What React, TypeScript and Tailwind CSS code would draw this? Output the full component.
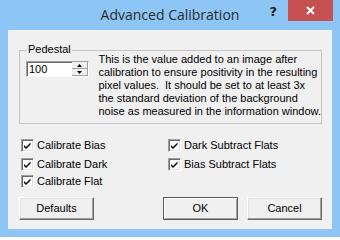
import React from "react";

const body = { fontFamily: '"Liberation Sans", Arial, sans-serif' };

function Check({ label }: { label: string }) {
  return (
    <div className="flex items-center h-[13px]">
      <div className="w-[13px] h-[13px] bg-white border border-t-[#a0a0a0] border-l-[#a0a0a0] border-b-white border-r-white shadow-[inset_1px_1px_0_#696969,inset_-1px_-1px_0_#e3e3e3] flex items-center justify-center">
        <svg width="9" height="9" viewBox="0 0 9 9">
          <path d="M1 4 L3 6 L7.5 1.5 L7.5 3.5 L3 8 L1 6 Z" fill="#000" />
        </svg>
      </div>
      <span className="ml-[3px] text-[11px] leading-[13px] text-black">{label}</span>
    </div>
  );
}

function Btn({ label, def }: { label: string; def?: boolean }) {
  return (
    <div
      className={
        "w-[75px] h-[23px] flex items-center justify-center text-[11px] text-black bg-[#f0f0f0] " +
        (def
          ? "border border-[#5a5a5a] shadow-[inset_1px_1px_0_#ffffff,inset_-1px_-1px_0_#a0a0a0]"
          : "border border-t-white border-l-white border-b-[#696969] border-r-[#696969] shadow-[inset_-1px_-1px_0_#a0a0a0,inset_1px_1px_0_#e3e3e3]")
      }
    >
      {label}
    </div>
  );
}

export default function App() {
  return (
    <div className="w-[340px] h-[237px] bg-[#8dc6f5] flex flex-col overflow-hidden" style={body}>
      <div className="h-[30px] grid grid-cols-[1fr_auto_1fr]">
        <div />
        <div
          className="pt-[5px] text-[14px] leading-[20px] text-[#2b2b2b]"
          style={{ fontFamily: '"Open Sans", "Noto Sans", sans-serif' }}
        >
          Advanced Calibration
        </div>
        <div className="flex justify-end items-start">
          <div className="mt-[4px] mr-[11px] text-[13px] font-bold leading-[15px] text-[#222]" style={{ fontFamily: '"DejaVu Sans", sans-serif' }}>?</div>
          <div className="w-[45px] h-[21px] mr-[7px] bg-[#c75050] flex items-center justify-center">
            <svg width="9" height="9" viewBox="0 0 9 9">
              <path d="M1 1 L8 8 M8 1 L1 8" stroke="#fff" strokeWidth="2" />
            </svg>
          </div>
        </div>
      </div>
      <div className="mx-[8px] h-[199px] bg-[#f0f0f0] flex flex-col pl-[11px] pr-[10px] pt-[20px]">
        <div className="relative w-[303px] h-[74px] border border-[#c4c4c4] flex items-start pl-[6px]">
          <div className="absolute left-[7px] top-[-8px] px-[1px] bg-[#f0f0f0] text-[11px] leading-[13px] text-black">
            Pedestal
          </div>
          <div className="mt-[10px] w-[72px] h-[16px] bg-white border border-t-[#a0a0a0] border-l-[#a0a0a0] border-b-white border-r-white shadow-[inset_1px_1px_0_#696969] flex">
            <div className="flex-1 pl-[2px] text-[11px] leading-[14px] text-black">100</div>
            <div className="w-[16px] flex flex-col">
              <div className="h-[7px] bg-[#f0f0f0] border-b border-r border-[#a0a0a0] flex items-center justify-center">
                <svg width="5" height="3" viewBox="0 0 5 3"><path d="M2.5 0 L5 3 L0 3 Z" fill="#000" /></svg>
              </div>
              <div className="h-[7px] bg-[#f0f0f0] border-b border-r border-[#a0a0a0] flex items-center justify-center">
                <svg width="5" height="3" viewBox="0 0 5 3"><path d="M0 0 L5 0 L2.5 3 Z" fill="#000" /></svg>
              </div>
            </div>
          </div>
          <div className="ml-[9px] mt-[2px] text-[11px] leading-[13px] text-black whitespace-nowrap">
            <div>This is the value added to an image after</div>
            <div>calibration to ensure positivity in the resulting</div>
            <div>pixel values.&nbsp; It should be set to at least 3x</div>
            <div>the standard deviation of the background</div>
            <div>noise as measured in the information window.</div>
          </div>
        </div>
        <div className="flex mt-[15px] pl-[2px]">
          <div className="w-[147px] flex flex-col">
            <Check label="Calibrate Bias" />
            <div className="h-[6px]" />
            <Check label="Calibrate Dark" />
            <div className="h-[4px]" />
            <Check label="Calibrate Flat" />
          </div>
          <div className="flex flex-col">
            <Check label="Dark Subtract Flats" />
            <div className="h-[6px]" />
            <Check label="Bias Subtract Flats" />
          </div>
        </div>
        <div className="flex mt-[9px]">
          <Btn label="Defaults" />
          <div className="w-[69px]" />
          <Btn label="OK" def />
          <div className="w-[9px]" />
          <Btn label="Cancel" />
        </div>
      </div>
    </div>
  );
}
